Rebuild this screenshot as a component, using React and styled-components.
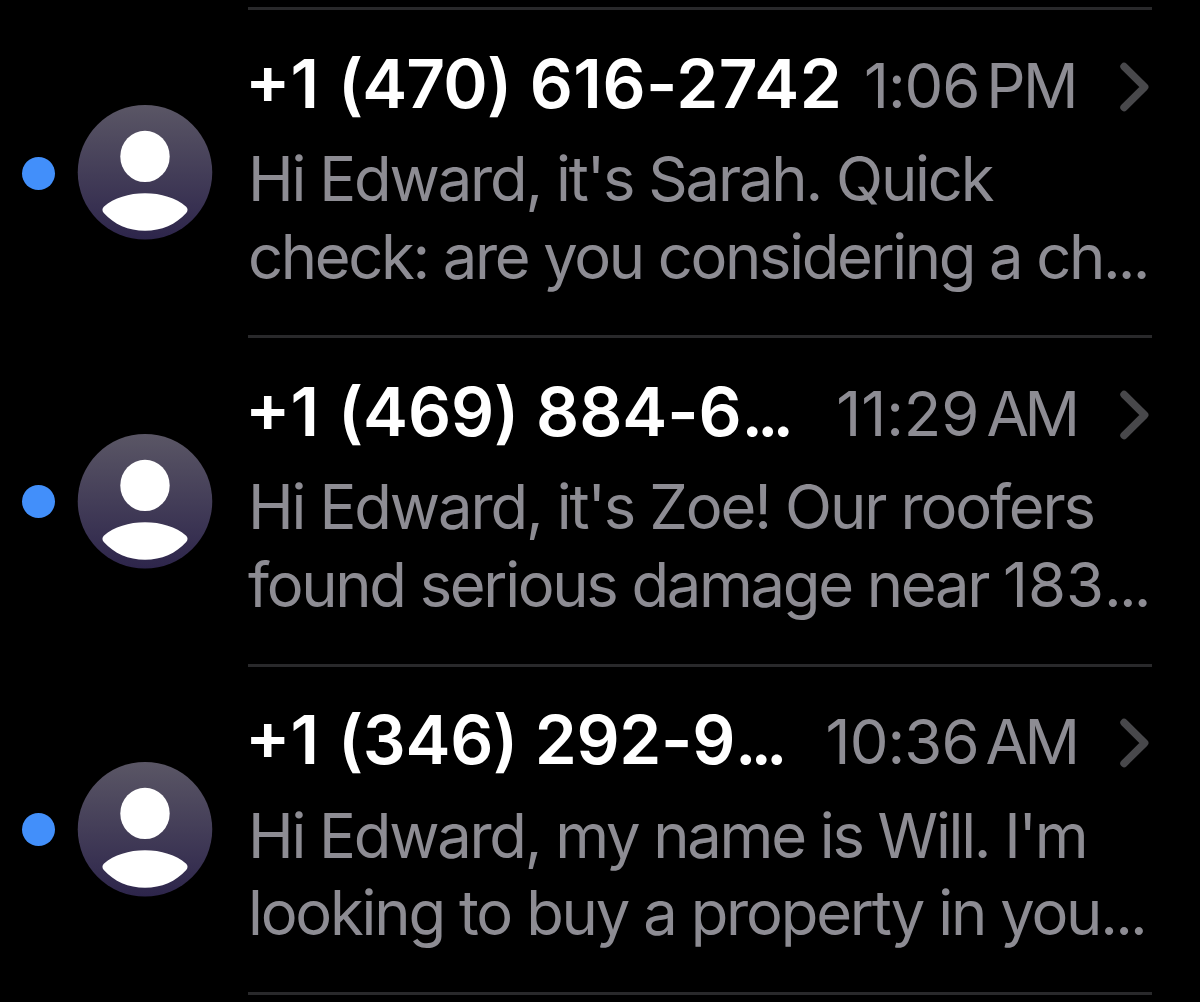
import React from 'react';
import styled, { createGlobalStyle } from 'styled-components';

const GlobalStyle = createGlobalStyle`
  * {
    box-sizing: border-box;
  }

  body {
    margin: 0;
    background: #000;
    font-family: 'Inter', 'Liberation Sans', sans-serif;
    overflow: hidden;
  }
`;

// every text is a list of runs: [characters, letter spacing in px]
const messages = [
  {
    id: 1,
    from: [['1 ', 1], ['(470', -0.9], [') ', 0.3], ['616-2742', 0.5]],
    time: [['1:06', -1.1], [' ', -1.5], ['P', -2.5], ['M', 0.5]],
    preview: [
      [["Hi Edward, it's Sarah. Quick", -2.19]],
      [['check: are you considering a ch', -2.35], ['...', -2.9]]
    ]
  },
  {
    id: 2,
    from: [['1 ', 1], ['(469) 884-6', -0.1], ['...', -6]],
    time: [['11:29', -0.1], [' ', -1], ['A', -4.5], ['M', -1]],
    preview: [
      [["Hi Edward, it's Zoe! Our roofers", -2.13]],
      [['found serious damage near ', -2.31], ['183', 0], ['...', -2.9]]
    ]
  },
  {
    id: 3,
    from: [['1 ', 1], ['(346) 292-9', -0.3], ['...', -6]],
    time: [['10:36', -0.9], [' ', -1.4], ['A', -3.6], ['M', -1]],
    preview: [
      [["Hi Edward, my name is Will. I'm", -2.27]],
      [['looking to buy a property in you', -2.2], ['...', -2.8]]
    ]
  }
];

const List = styled.main`
  width: 1200px;
  height: 1002px;
  padding: 7px 48px 0 22px;
  background: #000;
  overflow: hidden;
`;

const Row = styled.article`
  display: flex;
  height: 328.4px;
`;

const Status = styled.div`
  display: flex;
  align-items: center;
  width: 226px;
  height: 331px;
`;

const Unread = styled.span`
  width: 33px;
  height: 33px;
  margin: 1px 22.5px 0 0;
  border-radius: 50%;
  background: #428ffa;
`;

const Avatar = styled.svg`
  display: block;
  width: 134.5px;
  height: 134.5px;
  overflow: visible;
`;

const Content = styled.div`
  width: 904px;
  padding-top: 32px;
  border-top: 3px solid #29292b;
`;

const Header = styled.header`
  display: flex;
  align-items: center;
  height: 82px;
  margin-bottom: 16px;
`;

const Run = styled.span`
  letter-spacing: ${props => props.$spacing}px;
`;

const Sender = styled.div`
  flex: 1;
  min-width: 0;
  margin-left: -3px;
  color: #fff;
  font-size: 67.5px;
  font-weight: 600;
  font-feature-settings: 'calt' 0;
  line-height: 83px;
  white-space: pre;
`;

// lifted a little to sit level with the figures
const Plus = styled.span`
  line-height: 1;
  vertical-align: 4px;
`;

const Time = styled.div`
  padding-top: 5px;
  color: #8d8c93;
  font-size: 61.5px;
  line-height: 82px;
  white-space: pre;
  word-spacing: -9px;
`;

const Chevron = styled.svg`
  flex: none;
  width: 32px;
  height: 50px;
  margin: 7px 1px 0 40px;
`;

const Line = styled.div`
  color: #8d8c93;
  font-size: 61.5px;
  line-height: 77.6px;
  white-space: pre;
`;

const Bottom = styled.div`
  height: 3px;
  margin-left: 226px;
  background: #29292b;
`;

const Runs = ({ runs }) =>
  runs.map(([text, spacing], index) => (
    <Run key={index} $spacing={spacing}>{text}</Run>
  ));

const Person = ({ id }) => (
  <Avatar viewBox="0 0 134.5 134.5">
    <defs>
      <linearGradient id={`avatar-${id}`} x1="0" y1="0" x2="0" y2="1">
        <stop offset="0" stopColor="#5a5665" />
        <stop offset="1" stopColor="#2d254b" />
      </linearGradient>
    </defs>
    <circle cx="67" cy="67.25" r="67.25" fill={`url(#avatar-${id})`} />
    <ellipse cx="67" cy="51.4" rx="24.7" ry="25.7" fill="#fff" />
    <path
      d="M25.8 101.8C36 92.8 51 88.3 67 88.3S98 92.8 108.2 101.8C110 103.5 110 106 108.2 108C98 119.5 83.5 125.7 67 125.7S36 119.5 25.8 108C24 106 24 103.5 25.8 101.8Z"
      fill="#fff"
    />
  </Avatar>
);

const Message = ({ message }) => (
  <Row>
    <Status>
      <Unread />
      <Person id={message.id} />
    </Status>
    <Content>
      <Header>
        <Sender>
          <Plus>+</Plus>
          <Runs runs={message.from} />
        </Sender>
        <Time>
          <Runs runs={message.time} />
        </Time>
        <Chevron viewBox="0 0 32 50" fill="none">
          <path
            d="M5 4.5L25.7 25L5 45.5"
            stroke="#48484b"
            strokeWidth="7.4"
            strokeLinecap="round"
            strokeLinejoin="round"
          />
        </Chevron>
      </Header>
      {message.preview.map((runs, index) => (
        <Line key={index}>
          <Runs runs={runs} />
        </Line>
      ))}
    </Content>
  </Row>
);

const App = () => (
  <>
    <GlobalStyle />
    <List>
      {messages.map(message => (
        <Message key={message.id} message={message} />
      ))}
      <Bottom />
    </List>
  </>
);

export default App;
